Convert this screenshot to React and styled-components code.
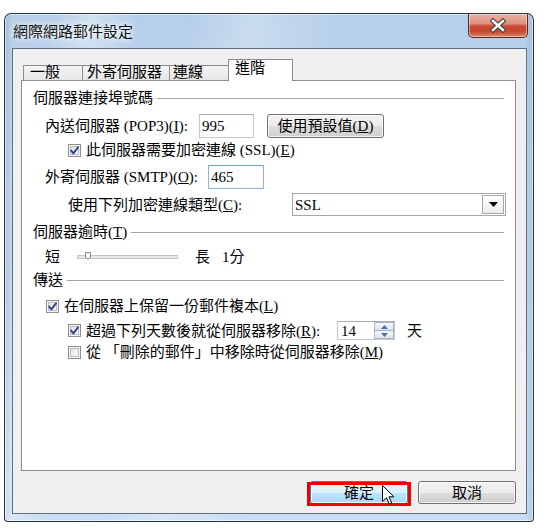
import React from "react";
import styled, { createGlobalStyle } from "styled-components";

const GlobalStyle = createGlobalStyle`
  html, body { margin: 0; padding: 0; background: #ffffff; }
  body {
    font-family: "Liberation Serif", "Noto Sans CJK TC", serif;
    font-size: 15px;
    color: #000;
  }
  * { box-sizing: border-box; }
  u { text-decoration: underline; text-underline-offset: 1px; }
`;

const Page = styled.div`
  width: 556px;
  height: 529px;
  padding: 13px 0 0 4px;
  position: relative;
`;

const Window = styled.div`
  width: 530px;
  height: 509px;
  border: 1px solid rgba(24, 36, 52, 0.9);
  border-radius: 7px 7px 4px 4px;
  padding: 0 6px 7px 7px;
  display: flex;
  flex-direction: column;
  background:
    linear-gradient(100deg, rgba(255,255,255,0) 8%, rgba(255,255,255,0.35) 14%, rgba(255,255,255,0) 22%),
    linear-gradient(100deg, rgba(255,255,255,0) 30%, rgba(255,255,255,0.25) 40%, rgba(255,255,255,0) 55%),
    linear-gradient(to right, rgba(90,110,140,0.18) 0px, rgba(90,110,140,0) 7px, rgba(90,110,140,0) 520px, rgba(90,110,140,0.2) 528px),
    linear-gradient(to bottom, #b6cfe9 0%, #c1d7ee 40%, #c9ddf2 100%);
  box-shadow: inset 0 0 0 1px rgba(255, 255, 255, 0.55);
`;

const TitleBar = styled.div`
  height: 34px;
  display: flex;
  justify-content: space-between;
  align-items: flex-start;
  padding-left: 1px;
  margin-right: -1px;
`;

const Title = styled.div`
  align-self: center;
  font-family: "Noto Sans CJK TC", sans-serif;
  font-size: 15px;
  line-height: 20px;
  color: #111;
  margin-top: -1px;
  text-shadow: 0 0 8px rgba(255,255,255,0.95), 0 0 4px rgba(255,255,255,0.9);
`;

const CloseButton = styled.div`
  width: 60px;
  height: 24px;
  border: 1px solid #5a2a24;
  border-top: none;
  border-radius: 0 0 5px 5px;
  background: linear-gradient(to bottom, #eab0a3 0%, #e0917f 42%, #cc4a33 52%, #c9472e 75%, #de8466 100%);
  box-shadow: inset 0 0 0 1px rgba(255, 255, 255, 0.45);
  display: flex;
  align-items: center;
  justify-content: center;
`;

const Client = styled.div`
  flex: 1;
  border: 1px solid #5f6e80;
  background: #f0f0f0;
  display: flex;
  flex-direction: column;
`;

const TabStrip = styled.div`
  margin-top: 10px;
  height: 22px;
  margin-bottom: -1px;
  padding-left: 10px;
  display: flex;
  align-items: flex-end;
  position: relative;
  z-index: 1;
`;

const Tab = styled.div`
  width: ${(p) => p.$w}px;
  height: ${(p) => (p.$active ? 22 : 15)}px;
  margin-bottom: ${(p) => (p.$active ? 0 : 1)}px;
  border-top: 1px solid #898c95;
  border-left: 1px solid #898c95;
  border-right: ${(p) => (p.$active ? "1px solid #898c95" : "none")};
  background: ${(p) => (p.$active ? "#ffffff" : "linear-gradient(to bottom, #f5f5f5, #e6e6e6)")};
  padding-left: ${(p) => p.$pl}px;
  line-height: ${(p) => (p.$active ? 15 : 13)}px;
  padding-top: ${(p) => (p.$active ? 1 : 0)}px;
  white-space: nowrap;
`;

const Panel = styled.div`
  margin: 0 10px 0 8px;
  height: 391px;
  border: 1px solid #898c95;
  background: #ffffff;
  padding: 0 11px;
  display: flex;
  flex-direction: column;
`;

const GroupHeader = styled.div`
  display: flex;
  align-items: center;
  height: 18px;
  margin-top: ${(p) => p.$mt}px;
  line-height: 18px;
  white-space: nowrap;
`;

const GroupLine = styled.div`
  flex: 1;
  height: 1px;
  margin-left: 4px;
  background: #a4a4a4;
`;

const Row = styled.div`
  display: flex;
  align-items: center;
  height: ${(p) => p.$h}px;
  margin-top: ${(p) => p.$mt}px;
  padding-left: ${(p) => p.$pl}px;
  line-height: 18px;
  white-space: nowrap;
`;

const Label = styled.div`
  width: ${(p) => p.$w}px;
  flex-shrink: 0;
`;

const TextBox = styled.div`
  width: ${(p) => p.$w}px;
  height: 100%;
  flex-shrink: 0;
  border: 1px solid ${(p) => (p.$focus ? "#8bb6e4" : "#c3c7cf")};
  border-top-color: ${(p) => (p.$focus ? "#6d9fd6" : "#abadb3")};
  background: #fff;
  padding-left: 2px;
  display: flex;
  align-items: center;
`;

const PushButton = styled.div`
  width: ${(p) => p.$w}px;
  height: ${(p) => p.$h}px;
  flex-shrink: 0;
  margin-left: ${(p) => p.$ml || 0}px;
  border: 1px solid ${(p) => (p.$hover ? "#3c7fb1" : "#707070")};
  border-radius: 3px;
  background: ${(p) =>
    p.$hover
      ? "linear-gradient(to bottom, #eaf6fd 0%, #d9f0fc 50%, #bee6fd 50%, #a7d9f5 100%)"
      : "linear-gradient(to bottom, #f2f2f2 0%, #ebebeb 50%, #dddddd 50%, #cfcfcf 100%)"};
  box-shadow: inset 0 0 0 1px rgba(255, 255, 255, 0.75);
  display: flex;
  align-items: center;
  justify-content: center;
  line-height: 18px;
`;

const CheckBoxBox = styled.div`
  width: 13px;
  height: 13px;
  flex-shrink: 0;
  border: 1px solid #8e8f8f;
  background: linear-gradient(135deg, #d8dbe0 0%, #f0f1f3 60%, #fbfbfb 100%);
  box-shadow: inset 0 0 0 1px #f4f4f4, inset 0 0 0 2px #b9bec5;
  display: flex;
  align-items: center;
  justify-content: center;
  margin-right: 5px;
`;

const CheckText = styled.div`
  width: ${(p) => (p.$w ? `${p.$w}px` : "auto")};
  flex-shrink: 0;
`;

const Select = styled.div`
  width: 214px;
  height: 100%;
  flex-shrink: 0;
  border: 1px solid #a7a7a7;
  background: #fff;
  display: flex;
  align-items: center;
  justify-content: space-between;
  padding: 0 1px 0 2px;
`;

const DropButton = styled.div`
  width: 22px;
  height: 19px;
  border: 1px solid #a7a7a7;
  background: linear-gradient(to bottom, #ffffff, #ececec);
  display: flex;
  align-items: center;
  justify-content: center;
`;

const Spinner = styled.div`
  width: 58px;
  height: 100%;
  flex-shrink: 0;
  border: 1px solid #c3c7cf;
  border-top-color: #abadb3;
  background: #fff;
  display: flex;
  align-items: stretch;
  justify-content: space-between;
  padding: 0 0 0 3px;
`;

const SpinValue = styled.div`
  display: flex;
  align-items: center;
`;

const SpinButtons = styled.div`
  width: 20px;
  display: flex;
  flex-direction: column;
`;

const SpinBtn = styled.div`
  flex: 1;
  border: 1px solid #a9b2c2;
  ${(p) => (p.$down ? "border-top: none;" : "")}
  background: linear-gradient(to bottom, #f6f7f9, #dfe3e9);
  display: flex;
  align-items: center;
  justify-content: center;
`;

const Unit = styled.div`
  margin-left: ${(p) => p.$ml}px;
`;

const ButtonRow = styled.div`
  margin-top: 10px;
  padding-right: 10px;
  display: flex;
  justify-content: flex-end;
  gap: 10px;
`;

const Highlighted = styled.div`
  position: relative;
`;

const RedFrame = styled.div`
  position: absolute;
  left: -3px;
  right: -3px;
  top: 1px;
  bottom: -2px;
  border: 3px solid #f00000;
  pointer-events: none;
`;

const Cursor = styled.svg`
  position: absolute;
  left: 72px;
  top: 4px;
`;

const u = (c) => <u>{c}</u>;

function Check({ checked, w, children }) {
  return (
    <>
      <CheckBoxBox>
        {checked && (
          <svg width="11" height="11" viewBox="0 0 11 11">
            <path
              d="M2.2 5.6 L4.4 8.3 L9 2.3"
              fill="none"
              stroke="#2e4687"
              strokeWidth="1.9"
              strokeLinecap="round"
              strokeLinejoin="round"
            />
          </svg>
        )}
      </CheckBoxBox>
      <CheckText $w={w}>{children}</CheckText>
    </>
  );
}

export default function App() {
  return (
    <>
      <GlobalStyle />
      <Page>
        <Window>
          <TitleBar>
            <Title>網際網路郵件設定</Title>
            <CloseButton>
              <svg width="18" height="15" viewBox="0 0 18 15">
                <path d="M4 3 L14 12 M14 3 L4 12" stroke="#3b3b3b" strokeWidth="4.6" strokeLinecap="square" />
                <path d="M4 3 L14 12 M14 3 L4 12" stroke="#ffffff" strokeWidth="2.6" strokeLinecap="square" />
              </svg>
            </CloseButton>
          </TitleBar>
          <Client>
            <TabStrip>
              <Tab $w={59} $pl={6}>一般</Tab>
              <Tab $w={87} $pl={4}>外寄伺服器</Tab>
              <Tab $w={59} $pl={3}>連線</Tab>
              <Tab $w={65} $pl={6} $active>進階</Tab>
            </TabStrip>
            <Panel>
              <GroupHeader $mt={8}>
                伺服器連接埠號碼
                <GroupLine />
              </GroupHeader>
              <Row $h={24} $mt={7} $pl={12}>
                <Label $w={154}>內送伺服器 (POP3)({u("I")}):</Label>
                <TextBox $w={55}>995</TextBox>
                <PushButton $w={117} $h={24} $ml={13}>使用預設值({u("D")})</PushButton>
              </Row>
              <Row $h={16} $mt={4} $pl={35}>
                <Check checked>此伺服器需要加密連線 (SSL)({u("E")})</Check>
              </Row>
              <Row $h={24} $mt={7} $pl={12}>
                <Label $w={163}>外寄伺服器 (SMTP)({u("O")}):</Label>
                <TextBox $w={56} $focus>465</TextBox>
              </Row>
              <Row $h={23} $mt={4} $pl={35}>
                <Label $w={224}>使用下列加密連線類型({u("C")}):</Label>
                <Select>
                  <span>SSL</span>
                  <DropButton>
                    <svg width="9" height="5" viewBox="0 0 9 5">
                      <path d="M0 0 L9 0 L4.5 5 Z" fill="#000" />
                    </svg>
                  </DropButton>
                </Select>
              </Row>
              <GroupHeader $mt={7}>
                伺服器逾時({u("T")})
                <GroupLine />
              </GroupHeader>
              <Row $h={18} $mt={7} $pl={12}>
                <span>短</span>
                <Unit $ml={17}>
                  <svg width="101" height="18" viewBox="0 0 101 18" style={{ display: "block" }}>
                    <rect x="0.5" y="7.5" width="100" height="3" fill="#e7eaea" stroke="#c6c6c6" />
                    <path d="M8.5 4.5 H13.5 V10 Q11 12.5 8.5 10 Z" fill="#f2f2f2" stroke="#8d8d8d" />
                  </svg>
                </Unit>
                <Unit $ml={17}>長</Unit>
                <Unit $ml={12}>1分</Unit>
              </Row>
              <GroupHeader $mt={5}>
                傳送
                <GroupLine />
              </GroupHeader>
              <Row $h={16} $mt={9} $pl={13}>
                <Check checked>在伺服器上保留一份郵件複本({u("L")})</Check>
              </Row>
              <Row $h={19} $mt={7} $pl={35}>
                <Check checked w={251}>超過下列天數後就從伺服器移除({u("R")}):</Check>
                <Spinner>
                  <SpinValue>14</SpinValue>
                  <SpinButtons>
                    <SpinBtn>
                      <svg width="7" height="4" viewBox="0 0 7 4">
                        <path d="M0 4 L3.5 0 L7 4 Z" fill="#4d6fb3" />
                      </svg>
                    </SpinBtn>
                    <SpinBtn $down>
                      <svg width="7" height="4" viewBox="0 0 7 4">
                        <path d="M0 0 L7 0 L3.5 4 Z" fill="#4d6fb3" />
                      </svg>
                    </SpinBtn>
                  </SpinButtons>
                </Spinner>
                <Unit $ml={12}>天</Unit>
              </Row>
              <Row $h={16} $mt={4} $pl={35}>
                <Check>從 「刪除的郵件」中移除時從伺服器移除({u("M")})</Check>
              </Row>
            </Panel>
            <ButtonRow>
              <Highlighted>
                <PushButton $w={98} $h={23} $hover>確定</PushButton>
                <RedFrame />
                <Cursor width="13" height="20" viewBox="0 0 13 20">
                  <path
                    d="M0.5 0.5 L0.5 16.5 L4.5 12.8 L7.2 18.8 L9.6 17.8 L7 11.8 L12 11.8 Z"
                    fill="#ffffff"
                    stroke="#000000"
                    strokeWidth="1"
                    strokeLinejoin="miter"
                  />
                </Cursor>
              </Highlighted>
              <PushButton $w={98} $h={23}>取消</PushButton>
            </ButtonRow>
          </Client>
        </Window>
      </Page>
    </>
  );
}
